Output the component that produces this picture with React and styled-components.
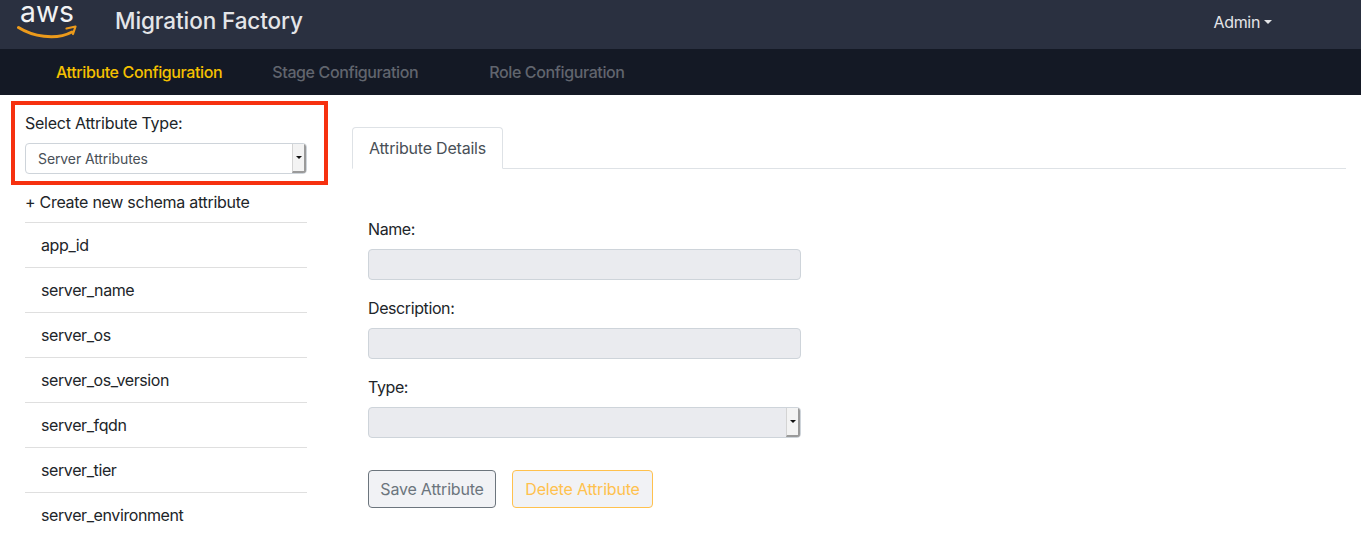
import React from 'react';
import styled, { createGlobalStyle } from 'styled-components';

const Global = createGlobalStyle`
  html, body { margin: 0; padding: 0; background: #fff; overflow: hidden; height: 538px; }
  body { font-family: Inter, "Liberation Sans", Arial, sans-serif; font-size: 16px; color: #212529; }
  * { box-sizing: border-box; }
`;

const Page = styled.div`
  width: 1361px;
  height: 538px;
  overflow: hidden;
  position: relative;
`;
const TopBar = styled.header`
  height: 49px;
  background: #2a3040;
  display: flex;
  align-items: flex-start;
  padding-left: 17px;
`;
const LogoWrap = styled.div`
  width: 98px;
  height: 49px;
  display: flex;
  align-items: flex-start;
`;
const Brand = styled.div`
  font-size: 22.5px;
  font-weight: 500;
  color: #e4e5e8;
  line-height: 42px;
  letter-spacing: -0.1px;
`;
const User = styled.div`
  margin-left: auto;
  margin-right: 89px;
  height: 44px;
  color: #e4e5e8;
  font-size: 16px;
  display: flex;
  align-items: center;
  gap: 4px;
  letter-spacing: -0.35px;
`;
const Caret = styled.span`
  width: 0;
  height: 0;
  border-left: 4px solid transparent;
  border-right: 4px solid transparent;
  border-top: 4px solid #e4e5e8;
`;
const SubBar = styled.nav`
  height: 46px;
  background: #141925;
  display: flex;
  align-items: center;
  padding-left: 56px;
`;
const SubLink = styled.a`
  font-size: 16px;
  font-weight: 500;
  letter-spacing: -0.38px;
  color: ${p => (p.$active ? '#f5c000' : '#61656e')};
  margin-right: ${p => p.$gap}px;
  white-space: nowrap;
`;
const Body = styled.div`
  display: flex;
  align-items: flex-start;
`;
const Side = styled.aside`
  width: 282px;
  margin-left: 25px;
  padding-top: 18px;
  flex: none;
`;
const FieldLabel = styled.label`
  display: block;
  font-size: 16px;
  line-height: 20px;
  letter-spacing: -0.25px;
  color: #212529;
`;
const SelectBox = styled.div`
  height: 31px;
  margin-top: ${p => p.$mt || 0}px;
  border: 1px solid #ced4da;
  border-radius: 4px;
  background: ${p => (p.$disabled ? '#eaebef' : '#fff')};
  display: flex;
  align-items: stretch;
  justify-content: space-between;
  padding-left: 12px;
  color: #495057;
  font-size: 14px;
  letter-spacing: -0.1px;
  overflow: hidden;
`;
const SelectValue = styled.span`
  align-self: center;
`;
const Arrow = styled.span`
  width: 14px;
  flex: none;
  background: #f3f3f3;
  border-left: 1px solid #d4d4d4;
  border-right: 2px solid #9a9a9a;
  border-bottom: 2px solid #9a9a9a;
  display: flex;
  align-items: center;
  justify-content: center;
`;
const ArrowGlyph = styled.span`
  width: 0;
  height: 0;
  border-left: 3px solid transparent;
  border-right: 3px solid transparent;
  border-top: 3px solid #111;
`;
const CreateRow = styled.div`
  height: 39px;
  padding-top: 9px;
  margin-top: 9px;
  font-size: 16px;
  line-height: 20px;
  letter-spacing: -0.28px;
  color: #212529;
`;
const AttrList = styled.ul`
  list-style: none;
  margin: 0;
  padding: 0;
`;
const AttrItem = styled.li`
  height: 45px;
  padding-left: 16px;
  border-top: 1px solid #dfdfdf;
  font-size: 16px;
  line-height: 44px;
  letter-spacing: -0.4px;
  color: #212529;
`;
const Main = styled.main`
  margin-left: 45px;
  width: 994px;
  padding-top: 32px;
  flex: none;
`;
const Tabs = styled.div`
  height: 42px;
  border-bottom: 1px solid #dee2e6;
  display: flex;
`;
const Tab = styled.div`
  width: 151px;
  height: 42px;
  background: #fff;
  border: 1px solid #dee2e6;
  border-bottom-color: #fff;
  border-radius: 4px 4px 0 0;
  font-size: 16px;
  line-height: 40px;
  text-align: center;
  color: #495057;
  letter-spacing: -0.2px;
`;
const Form = styled.div`
  width: 433px;
  margin-left: 16px;
  padding-top: 50px;
`;
const Group = styled.div`
  margin-bottom: 18px;
`;
const FormLabel = styled(FieldLabel)`
  margin-bottom: 10px;
  letter-spacing: -0.4px;
`;
const Input = styled.div`
  height: 31px;
  background: #eaebef;
  border: 1px solid #ced4da;
  border-radius: 4px;
`;
const Actions = styled.div`
  display: flex;
  gap: 16px;
  margin-top: 32px;
`;
const Button = styled.button`
  height: 38px;
  width: ${p => p.$w}px;
  padding: 0;
  background: #f1f2f5;
  border: 1px solid ${p => p.$color};
  border-radius: 4px;
  color: ${p => p.$color};
  font-family: inherit;
  font-size: 16px;
  letter-spacing: -0.2px;
`;
const Annotation = styled.div`
  position: absolute;
  left: 11px;
  top: 101px;
  width: 317px;
  height: 84px;
  border: 4px solid #f6310f;
  pointer-events: none;
`;

const AwsLogo = () => (
  <svg width="62" height="42" viewBox="0 0 62 42" fill="none">
    <text x="3" y="22" fontFamily="Inter, Liberation Sans, sans-serif" fontSize="29" fill="#f2f3f4" textLength="54" lengthAdjust="spacingAndGlyphs">aws</text>
    <path d="M1.5 27.5 C 15 36, 38 41, 55 32" stroke="#ec9a1b" strokeWidth="3" fill="none" strokeLinecap="round" />
    <path d="M49.5 28.5 L 58.5 26.5 L 56 34" stroke="#ec9a1b" strokeWidth="2.2" fill="none" strokeLinejoin="round" strokeLinecap="round" />
  </svg>
);

const attrs = ['app_id', 'server_name', 'server_os', 'server_os_version', 'server_fqdn', 'server_tier', 'server_environment'];

function NativeArrow() {
  return <Arrow><ArrowGlyph /></Arrow>;
}

export default function App() {
  return (
    <Page>
      <Global />
      <TopBar>
        <LogoWrap><AwsLogo /></LogoWrap>
        <Brand>Migration Factory</Brand>
        <User>Admin <Caret /></User>
      </TopBar>
      <SubBar>
        <SubLink $active $gap={50}>Attribute Configuration</SubLink>
        <SubLink $gap={71}>Stage Configuration</SubLink>
        <SubLink $gap={0}>Role Configuration</SubLink>
      </SubBar>
      <Body>
        <Side>
          <FieldLabel>Select Attribute Type:</FieldLabel>
          <SelectBox $mt={10}>
            <SelectValue>Server Attributes</SelectValue>
            <NativeArrow />
          </SelectBox>
          <CreateRow>+ Create new schema attribute</CreateRow>
          <AttrList>
            {attrs.map(a => <AttrItem key={a}>{a}</AttrItem>)}
          </AttrList>
        </Side>
        <Main>
          <Tabs><Tab>Attribute Details</Tab></Tabs>
          <Form>
            <Group>
              <FormLabel>Name:</FormLabel>
              <Input />
            </Group>
            <Group>
              <FormLabel>Description:</FormLabel>
              <Input />
            </Group>
            <Group>
              <FormLabel>Type:</FormLabel>
              <SelectBox $disabled><span /><NativeArrow /></SelectBox>
            </Group>
            <Actions>
              <Button $w={128} $color="#6c757d">Save Attribute</Button>
              <Button $w={141} $color="#ffc14d">Delete Attribute</Button>
            </Actions>
          </Form>
        </Main>
      </Body>
      <Annotation />
    </Page>
  );
}
